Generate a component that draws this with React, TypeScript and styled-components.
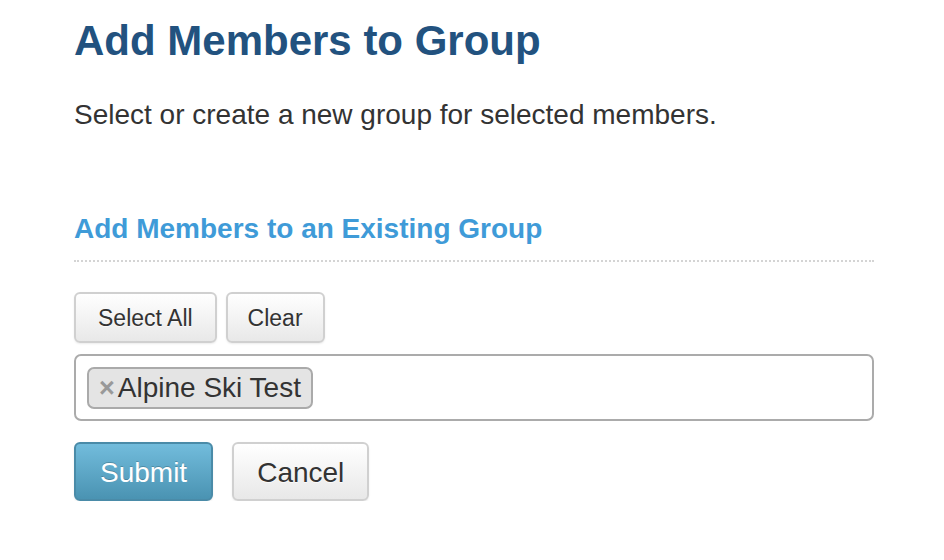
import React from 'react';
import styled, { createGlobalStyle } from 'styled-components';

const GlobalStyle = createGlobalStyle`
  body {
    margin: 0;
    background: #ffffff;
    font-family: "Liberation Sans", Arial, Helvetica, sans-serif;
    color: #333333;
  }
`;

const Page = styled.div`
  width: 800px;
  padding: 16px 0 0 74px;
`;

const Title = styled.h1`
  margin: 0;
  font-size: 42px;
  line-height: 50px;
  font-weight: bold;
  color: #22527f;
`;

const Lead = styled.p`
  margin: 31px 0 0;
  font-size: 28px;
  line-height: 36px;
  color: #333333;
`;

const SectionHeader = styled.h2`
  margin: 78px 0 0;
  padding-bottom: 13px;
  font-size: 28px;
  line-height: 36px;
  font-weight: bold;
  color: #3f9bd8;
  border-bottom: 2px dotted #d4d4d4;
`;

const ButtonRow = styled.div<{ $gap: number }>`
  display: flex;
  gap: ${(p) => p.$gap}px;
`;

const Button = styled.button<{ $primary?: boolean; $size: number; $height: number; $pad: number }>`
  box-sizing: border-box;
  height: ${(p) => p.$height}px;
  padding: 2px ${(p) => p.$pad}px 0;
  font-family: inherit;
  font-size: ${(p) => p.$size}px;
  border-radius: 6px;
  cursor: pointer;
  border: 2px solid ${(p) => (p.$primary ? '#4a8ba8' : '#d0d0d0')};
  color: ${(p) => (p.$primary ? '#ffffff' : '#333333')};
  background: ${(p) =>
    p.$primary
      ? 'linear-gradient(to bottom, #72bcdc, #4a93b2)'
      : 'linear-gradient(to bottom, #ffffff, #e8e8e8)'};
  text-shadow: ${(p) => (p.$primary ? '0 -1px 0 rgba(0,0,0,0.2)' : '0 1px 0 rgba(255,255,255,0.7)')};
  box-shadow: 0 1px 2px rgba(0, 0, 0, 0.08);
`;

const TopButtons = styled(ButtonRow)`
  margin-top: 30px;
`;

const FormButtons = styled(ButtonRow)`
  margin-top: 21px;
`;

const TagBox = styled.div`
  box-sizing: border-box;
  margin-top: 11px;
  height: 67px;
  padding: 0 11px;
  display: flex;
  align-items: center;
  border: 2px solid #ababab;
  border-radius: 7px;
`;

const Tag = styled.span`
  box-sizing: border-box;
  height: 42px;
  display: inline-flex;
  align-items: center;
  padding: 1px 10px 0 10px;
  background: #e4e4e4;
  border: 2px solid #aaaaaa;
  border-radius: 7px;
  font-size: 28px;
  color: #333333;
`;

const TagRemove = styled.span`
  font-size: 27px;
  font-weight: bold;
  color: #999999;
  margin-right: 3px;
  line-height: 1;
`;

export default function App() {
  return (
    <>
      <GlobalStyle />
      <Page>
        <Title>Add Members to Group</Title>
        <Lead>Select or create a new group for selected members.</Lead>
        <SectionHeader>Add Members to an Existing Group</SectionHeader>
        <TopButtons $gap={9}>
          <Button $size={23} $height={51} $pad={22}>Select All</Button>
          <Button $size={23} $height={51} $pad={20}>Clear</Button>
        </TopButtons>
        <TagBox>
          <Tag>
            <TagRemove>×</TagRemove>Alpine Ski Test
          </Tag>
        </TagBox>
        <FormButtons $gap={19}>
          <Button $primary $size={28} $height={59} $pad={24}>Submit</Button>
          <Button $size={28} $height={59} $pad={23}>Cancel</Button>
        </FormButtons>
      </Page>
    </>
  );
}
